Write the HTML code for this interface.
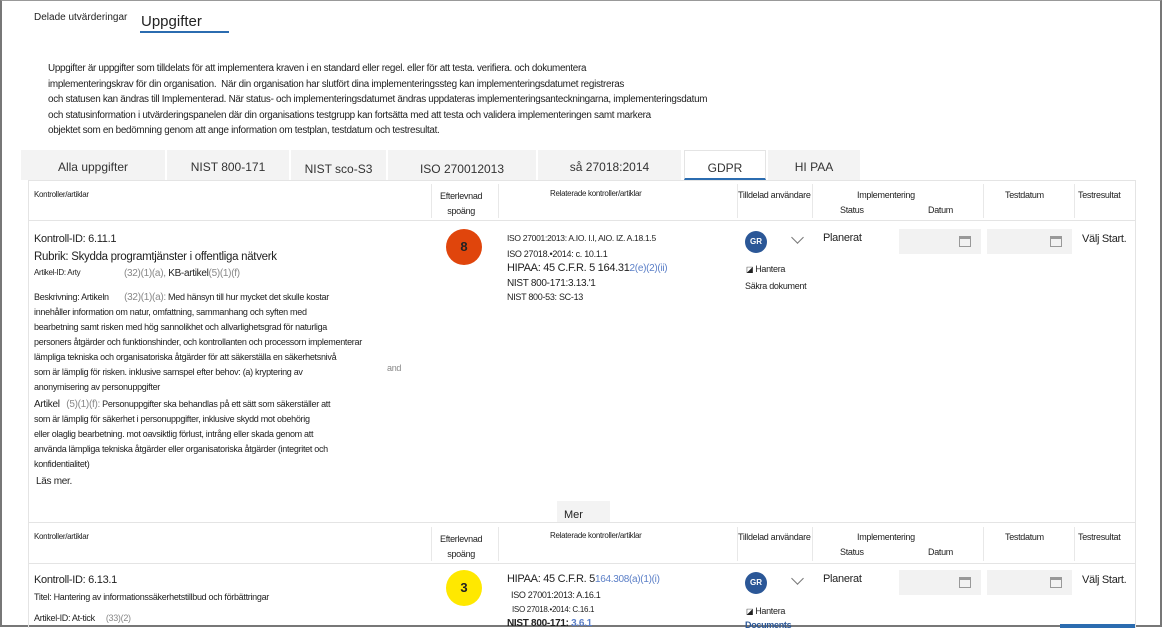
<!DOCTYPE html>
<html><head><meta charset="utf-8"><style>
*{margin:0;padding:0;box-sizing:border-box}
body{width:1164px;height:628px;overflow:hidden;background:#fff;font-family:"Liberation Sans",Arial,sans-serif;color:#222;position:relative}
.a{position:absolute;white-space:nowrap}
.frame{position:absolute;left:0;top:0;width:1162px;height:627px;border:2px solid #777;border-top:1px solid #999}
.s{font-size:9px;letter-spacing:-0.3px}
.t{font-size:8px;letter-spacing:-0.3px}
.m{font-size:10px;letter-spacing:-0.3px}
.tab{position:absolute;top:150px;height:30px;background:#f3f3f3;font-size:12px;text-align:center;line-height:34px;color:#333}
.hl{position:absolute;height:1px;background:#e4e4e4}
.vl{position:absolute;width:1px;background:#e8e8e8}
.date{position:absolute;background:#f2f2f2;width:76px;height:25px}
.cal{position:absolute;right:10px;top:7px;width:12px;height:11px;border:1px solid #999;border-top:3px solid #999}
.av{position:absolute;width:22px;height:22px;border-radius:50%;background:#2b5797;color:#fff;font-size:8px;font-weight:bold;text-align:center;line-height:22px}
.chev{position:absolute;width:9px;height:9px;border-right:1px solid #777;border-bottom:1px solid #777;transform:rotate(45deg)}
.gr{color:#888}.bl{color:#5b7fc7}
</style></head><body>
<div class="frame"></div>
<div class="a" style="left:34px;top:12px;font-size:10px">Delade utvärderingar</div>
<div class="a" style="left:141px;top:13px;font-size:15px">Uppgifter</div>
<div class="a" style="left:140px;top:31px;width:89px;height:2px;background:#2b6cb0"></div>
<div class="a" style="left:48px;top:61px;line-height:15.5px;font-size:9.9px;letter-spacing:-0.3px">Uppgifter är uppgifter som tilldelats för att implementera kraven i en standard eller regel. eller för att testa. verifiera. och dokumentera<br>implementeringskrav för din organisation.&nbsp; När din organisation har slutfört dina implementeringssteg kan implementeringsdatumet registreras<br>och statusen kan ändras till Implementerad. När status- och implementeringsdatumet ändras uppdateras implementeringsanteckningarna, implementeringsdatum<br>och statusinformation i utvärderingspanelen där din organisations testgrupp kan fortsätta med att testa och validera implementeringen samt markera<br>objektet som en bedömning genom att ange information om testplan, testdatum och testresultat.</div>
<div class="tab" style="left:21px;width:144px">Alla uppgifter</div>
<div class="tab" style="left:167px;width:122px">NIST 800-171</div>
<div class="tab" style="left:291px;width:95px;line-height:38px">NIST sco-S3</div>
<div class="tab" style="left:388px;width:148px;line-height:38px">ISO 270012013</div>
<div class="tab" style="left:538px;width:143px">så 27018:2014</div>
<div class="tab" style="left:684px;width:82px;background:#fff;border:1px solid #e4e4e4;border-bottom:2px solid #2b6cb0">GDPR</div>
<div class="tab" style="left:768px;width:92px">HI PAA</div>
<div class="a" style="left:28px;top:180px;width:1108px;height:448px;border:1px solid #e4e4e4;border-bottom:none"></div>
<div class="a t" style="left:34px;top:190px">Kontroller/artiklar</div>
<div class="vl" style="left:431px;top:184px;height:34px"></div>
<div class="a s" style="left:440px;top:189px;line-height:15px;text-align:center">Efterlevnad<br>spoäng</div>
<div class="vl" style="left:498px;top:184px;height:34px"></div>
<div class="a t" style="left:550px;top:189px">Relaterade kontroller/artiklar</div>
<div class="vl" style="left:737px;top:184px;height:34px"></div>
<div class="a s" style="left:738px;top:190px">Tilldelad användare</div>
<div class="vl" style="left:812px;top:184px;height:34px"></div>
<div class="a s" style="left:857px;top:190px">Implementering</div>
<div class="a s" style="left:840px;top:205px">Status</div>
<div class="a s" style="left:928px;top:205px">Datum</div>
<div class="vl" style="left:983px;top:184px;height:34px"></div>
<div class="a s" style="left:1005px;top:190px">Testdatum</div>
<div class="vl" style="left:1074px;top:184px;height:34px"></div>
<div class="a s" style="left:1078px;top:190px">Testresultat</div>
<div class="hl" style="left:29px;top:220px;width:1106px"></div>
<div class="a m" style="left:34px;top:233px;font-size:11px">Kontroll-ID: 6.11.1</div>
<div class="a m" style="left:34px;top:251px;font-size:11.5px">Rubrik: Skydda programtjänster i offentliga nätverk</div>
<div class="a t" style="left:34px;top:268px">Artikel-ID: Arty</div>
<div class="a m" style="left:124px;top:268px"><span class="gr">(32)(1)(a),</span> KB-artikel<span class="gr">(5)(1)(f)</span></div>
<div class="a s" style="left:34px;top:290px;line-height:15px">Beskrivning: Artikeln &nbsp;&nbsp;&nbsp;&nbsp;&nbsp;&nbsp;<span class="gr" style="font-size:10px">(32)(1)(a):</span> Med hänsyn till hur mycket det skulle kostar<br>innehåller information om natur, omfattning, sammanhang och syften med<br>bearbetning samt risken med hög sannolikhet och allvarlighetsgrad för naturliga<br>personers åtgärder och funktionshinder, och kontrollanten och processorn implementerar<br>lämpliga tekniska och organisatoriska åtgärder för att säkerställa en säkerhetsnivå<br>som är lämplig för risken. inklusive samspel efter behov: (a) kryptering av<br>anonymisering av personuppgifter</div>
<div class="a s gr" style="left:387px;top:363px">and</div>
<div class="a s" style="left:34px;top:397px;line-height:15px"><span style="font-size:10px">Artikel</span> &nbsp;&nbsp;<span class="gr" style="font-size:10px">(5)(1)(f):</span> Personuppgifter ska behandlas på ett sätt som säkerställer att<br>som är lämplig för säkerhet i personuppgifter, inklusive skydd mot obehörig<br>eller olaglig bearbetning. mot oavsiktlig förlust, intrång eller skada genom att<br>använda lämpliga tekniska åtgärder eller organisatoriska åtgärder (integritet och<br>konfidentialitet)</div>
<div class="a m" style="left:36px;top:476px">Läs mer.</div>
<div class="a" style="left:446px;top:229px;width:36px;height:36px;border-radius:50%;background:#e0450c;color:#222;font-size:13px;font-weight:bold;text-align:center;line-height:36px">8</div>
<div class="a t" style="left:507px;top:233px;font-size:8.5px">ISO 27001:2013: A.IO. I.I, AIO. IZ. A.18.1.5</div>
<div class="a s" style="left:507px;top:249px">ISO 27018.•2014: c. 10.1.1</div>
<div class="a m" style="left:507px;top:262px;font-size:11px">HIPAA: 45 C.F.R. 5 164.31<span class="bl" style="font-size:10px">2(e)(2)(ii)</span></div>
<div class="a m" style="left:507px;top:278px">NIST 800-171:3.13.'1</div>
<div class="a s" style="left:507px;top:292px">NIST 800-53: SC-13</div>
<div class="av" style="left:745px;top:231px">GR</div>
<div class="chev" style="left:793px;top:233px"></div>
<div class="a t" style="left:746px;top:264px">◪ <span style="font-size:9px">Hantera</span></div>
<div class="a s" style="left:745px;top:281px">Säkra dokument</div>
<div class="a m" style="left:823px;top:232px;font-size:11px">Planerat</div>
<div class="date" style="left:899px;top:229px;width:82px"><div class="cal"></div></div>
<div class="date" style="left:987px;top:229px;width:85px"><div class="cal"></div></div>
<div class="a m" style="left:1082px;top:233px;font-size:11px">Välj Start.</div>
<div class="a" style="left:557px;top:501px;width:53px;height:22px;background:#f3f3f3;font-size:11px;padding:8px 0 0 7px">Mer</div>
<div class="hl" style="left:29px;top:522px;width:1106px"></div>
<div class="a t" style="left:34px;top:532px">Kontroller/artiklar</div>
<div class="vl" style="left:431px;top:527px;height:34px"></div>
<div class="a s" style="left:440px;top:532px;line-height:15px;text-align:center">Efterlevnad<br>spoäng</div>
<div class="vl" style="left:498px;top:527px;height:34px"></div>
<div class="a t" style="left:550px;top:531px">Relaterade kontroller/artiklar</div>
<div class="vl" style="left:737px;top:527px;height:34px"></div>
<div class="a s" style="left:738px;top:532px">Tilldelad användare</div>
<div class="vl" style="left:812px;top:527px;height:34px"></div>
<div class="a s" style="left:857px;top:532px">Implementering</div>
<div class="a s" style="left:840px;top:547px">Status</div>
<div class="a s" style="left:928px;top:547px">Datum</div>
<div class="vl" style="left:983px;top:527px;height:34px"></div>
<div class="a s" style="left:1005px;top:532px">Testdatum</div>
<div class="vl" style="left:1074px;top:527px;height:34px"></div>
<div class="a s" style="left:1078px;top:532px">Testresultat</div>
<div class="hl" style="left:29px;top:563px;width:1106px"></div>
<div class="a m" style="left:34px;top:574px;font-size:11px">Kontroll-ID: 6.13.1</div>
<div class="a s" style="left:34px;top:592px">Titel: Hantering av informationssäkerhetstillbud och förbättringar</div>
<div class="a t" style="left:34px;top:613px;font-size:9px">Artikel-ID: At-tick &nbsp;&nbsp;&nbsp;&nbsp;<span class="gr">(33)(2)</span></div>
<div class="a" style="left:446px;top:570px;width:36px;height:36px;border-radius:50%;background:#ffe800;color:#222;font-size:13px;font-weight:bold;text-align:center;line-height:36px">3</div>
<div class="a m" style="left:507px;top:573px;font-size:11px">HIPAA: 45 C.F.R. 5<span class="bl" style="font-size:10px">164.308(a)(1)(i)</span></div>
<div class="a s" style="left:511px;top:590px">ISO 27001:2013: A.16.1</div>
<div class="a t" style="left:512px;top:605px">ISO 27018.•2014: C.16.1</div>
<div class="a m" style="left:507px;top:618px;font-weight:bold">NIST 800-171: <span class="bl">3.6.1</span></div>
<div class="av" style="left:745px;top:572px">GR</div>
<div class="chev" style="left:793px;top:574px"></div>
<div class="a t" style="left:746px;top:606px">◪ <span style="font-size:9px">Hantera</span></div>
<div class="a s" style="left:745px;top:620px;color:#2b5797;font-weight:bold">Documents</div>
<div class="a m" style="left:823px;top:573px;font-size:11px">Planerat</div>
<div class="date" style="left:899px;top:570px;width:82px"><div class="cal"></div></div>
<div class="date" style="left:987px;top:570px;width:85px"><div class="cal"></div></div>
<div class="a m" style="left:1082px;top:574px;font-size:11px">Välj Start.</div>
<div class="a" style="left:1060px;top:624px;width:75px;height:4px;background:#2b6cb0"></div>
</body></html>
